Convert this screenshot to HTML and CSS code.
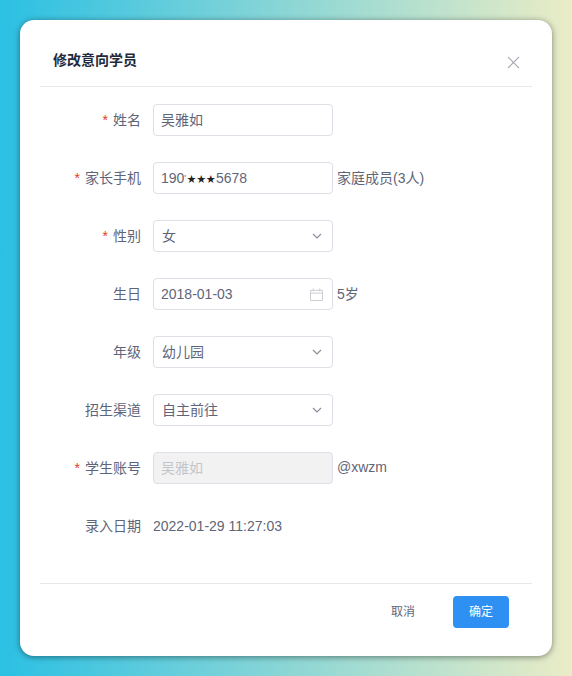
FILE: index.html
```html
<!DOCTYPE html>
<html lang="zh-CN">
<head>
<meta charset="utf-8">
<title>修改意向学员</title>
<link rel="stylesheet" href="styles.css">
</head>
<body>
<div class="dialog">
  <header class="dialog-header">
    <h2 class="dialog-title">修改意向学员</h2>
    <svg class="close" viewBox="0 0 14 14" width="13" height="13"><path d="M1 1 13 13M13 1 1 13" fill="none" stroke="#a3a6ad" stroke-width="1.1"/></svg>
  </header>
  <main class="dialog-body">
    <div class="row">
      <label class="label required">姓名</label>
      <div class="field"><span class="cjk">吴雅如</span></div>
    </div>
    <div class="row">
      <label class="label required">家长手机</label>
      <div class="field"><span>190<span class="dot">'</span><span class="stars">★★★</span>5678</span></div>
      <span class="extra">家庭成员(3人)</span>
    </div>
    <div class="row">
      <label class="label required">性别</label>
      <div class="field select"><span class="cjk">女</span><svg class="chev" viewBox="0 0 10 6" width="10" height="6"><path d="M1 1 5 5 9 1" fill="none" stroke="#8a8f99" stroke-width="1.2"/></svg></div>
    </div>
    <div class="row">
      <label class="label">生日</label>
      <div class="field"><span>2018-01-03</span><svg class="cal" viewBox="0 0 14 14" width="13" height="13"><path d="M.5 2.5h13v11H.5zM.5 5.5h13M3.5 .5v3M10.5 .5v3" fill="none" stroke="#c6c8cc" stroke-width="1"/></svg></div>
      <span class="extra">5岁</span>
    </div>
    <div class="row">
      <label class="label">年级</label>
      <div class="field select"><span class="cjk">幼儿园</span><svg class="chev" viewBox="0 0 10 6" width="10" height="6"><path d="M1 1 5 5 9 1" fill="none" stroke="#8a8f99" stroke-width="1.2"/></svg></div>
    </div>
    <div class="row">
      <label class="label">招生渠道</label>
      <div class="field select"><span class="cjk">自主前往</span><svg class="chev" viewBox="0 0 10 6" width="10" height="6"><path d="M1 1 5 5 9 1" fill="none" stroke="#8a8f99" stroke-width="1.2"/></svg></div>
    </div>
    <div class="row">
      <label class="label required">学生账号</label>
      <div class="field disabled"><span class="cjk">吴雅如</span></div>
      <span class="extra">@xwzm</span>
    </div>
    <div class="row">
      <label class="label">录入日期</label>
      <span class="plain">2022-01-29 11:27:03</span>
    </div>
  </main>
  <footer class="dialog-footer">
    <button class="btn">取消</button>
    <button class="btn primary">确定</button>
  </footer>
</div>
</body>
</html>
```
FILE: styles.css
```css
* { box-sizing: border-box; }
html, body { height: 100%; }
body {
  margin: 0;
  padding: 20px;
  background: linear-gradient(90deg, #2bc0e4, #eaecc6);
  font-family: "Liberation Sans", "Noto Sans CJK SC", sans-serif;
  font-size: 14px;
  color: #5f6579;
  overflow: hidden;
}
.dialog {
  width: 532px;
  height: 636px;
  padding: 0 20px;
  background: #fff;
  border-radius: 14px;
  box-shadow: 0 1px 6px rgba(0, 0, 0, .45);
  display: flex;
  flex-direction: column;
}
.dialog-header {
  height: 67px;
  flex: none;
  border-bottom: 1px solid #e8e8ea;
  display: flex;
  align-items: flex-start;
  justify-content: space-between;
  padding: 31px 12px 0 13px;
}
.dialog-title {
  margin: 0;
  font-size: 14px;
  line-height: 18px;
  font-weight: 700;
  color: #1f2a3d;
}
.close { margin-top: 5px; }
.dialog-body {
  flex: 1;
  padding-top: 17px;
  display: flex;
  flex-direction: column;
  gap: 26px;
}
.row {
  height: 32px;
  display: flex;
  align-items: center;
}
.label {
  width: 101px;
  text-align: right;
  flex: none;
  font-size: 14px;
  padding-bottom: 2px;
}
.required::before {
  content: "*";
  color: #e8391a;
  margin-right: 5px;
}
.field {
  width: 180px;
  height: 32px;
  margin-left: 12px;
  padding: 0 7px;
  border: 1px solid #dcdfe6;
  border-radius: 4px;
  display: flex;
  align-items: center;
  justify-content: space-between;
  flex: none;
}
.select { padding-left: 8px; }
.cjk { padding-bottom: 2px; }
.stars { color: #222; font-size: 9px; letter-spacing: .6px; vertical-align: 1px; }
.dot { font-size: 9px; vertical-align: 2px; margin-right: 1px; }
.chev { margin-right: 3px; }
.cal { margin-right: 2px; }
.disabled {
  background: #f2f2f3;
  color: #c3c5ca;
}
.extra { margin-left: 4px; font-size: 14px; padding-bottom: 2px; }
.plain { margin-left: 12px; padding-bottom: 1px; }
.dialog-footer {
  height: 73px;
  flex: none;
  border-top: 1px solid #e8e8ea;
  display: flex;
  justify-content: flex-end;
  align-items: flex-start;
  padding: 12px 23px 0 0;
  gap: 25px;
}
.btn {
  width: 50px;
  height: 32px;
  padding: 0 0 3px;
  border: 0;
  border-radius: 4px;
  background: transparent;
  color: #5f6579;
  font: inherit;
  font-size: 12px;
}
.primary {
  width: 56px;
  background: #2e90f2;
  color: #fff;
}
```
